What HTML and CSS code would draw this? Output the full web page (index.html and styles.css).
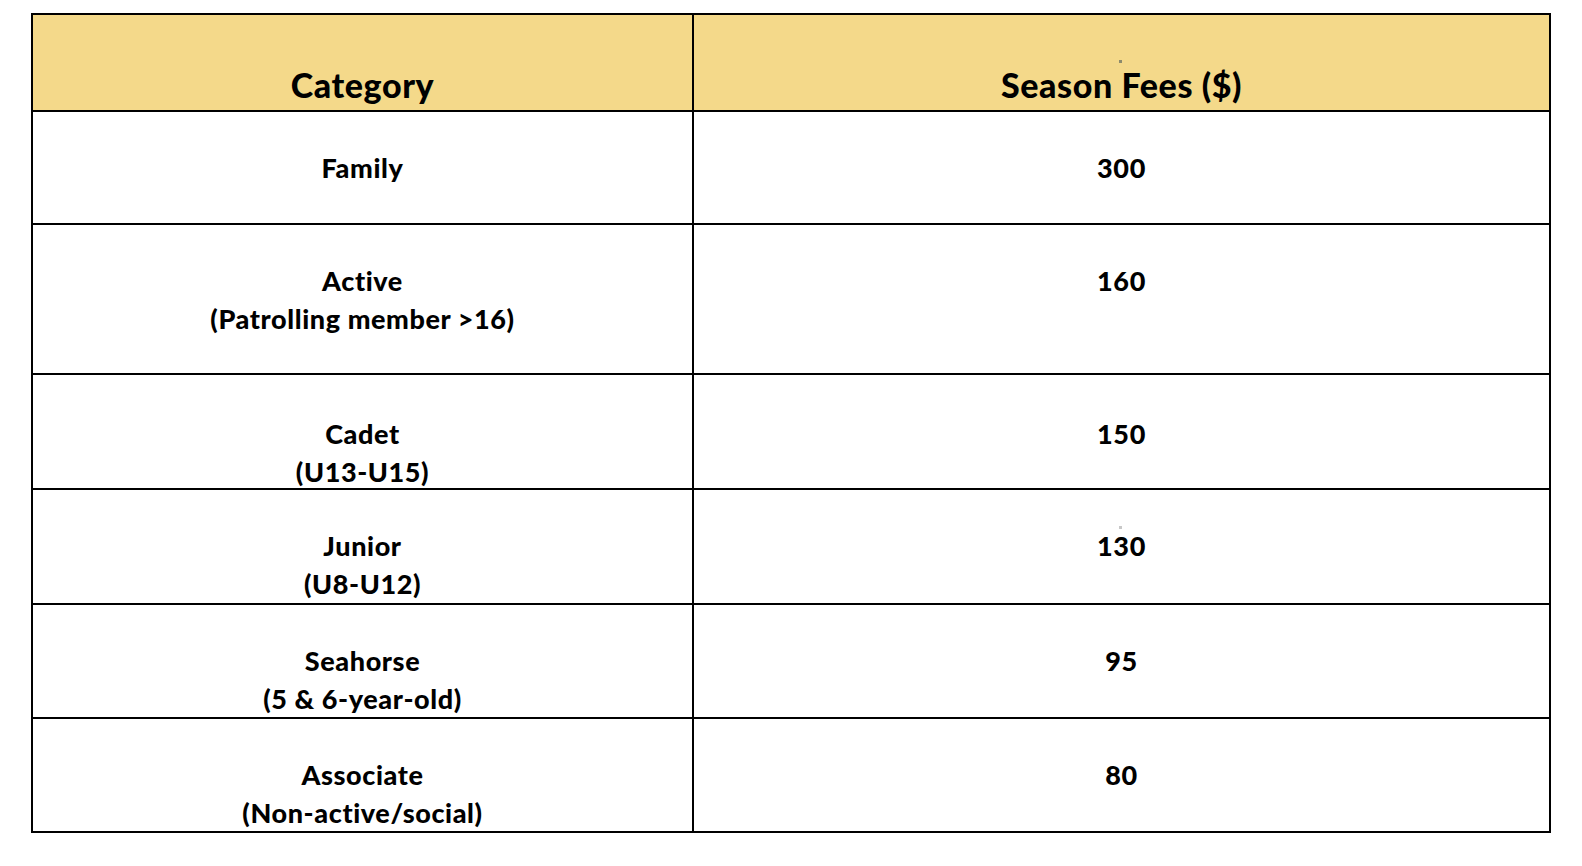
FILE: index.html
```html
<!DOCTYPE html>
<html lang="en">
<head>
<meta charset="utf-8">
<title>Season Fees</title>
<link rel="stylesheet" href="styles.css">
</head>
<body>
<div class="fees">
  <div class="cell head">Category</div>
  <div class="cell head right-col">Season Fees ($)<span class="mark mark-head"></span></div>

  <div class="cell"><span>Family</span></div>
  <div class="cell"><span>300</span></div>

  <div class="cell"><span>Active</span><span>(Patrolling member &gt;16)</span></div>
  <div class="cell"><span>160</span></div>

  <div class="cell low"><span>Cadet</span><span>(U13-U15)</span></div>
  <div class="cell low"><span>150</span></div>

  <div class="cell"><span>Junior</span><span>(U8-U12)</span></div>
  <div class="cell right-col"><span>130</span><span class="mark mark-body"></span></div>

  <div class="cell"><span>Seahorse</span><span>(5 &amp; 6-year-old)</span></div>
  <div class="cell"><span>95</span></div>

  <div class="cell"><span>Associate</span><span>(Non-active/social)</span></div>
  <div class="cell"><span>80</span></div>
</div>
</body>
</html>
```

FILE: styles.css
```css
html, body {
  margin: 0;
  padding: 0;
  background: #ffffff;
}

body {
  font-family: "Lato", "Liberation Sans", sans-serif;
  font-weight: 900;
  color: #000000;
}

.fees {
  box-sizing: border-box;
  margin: 13px 0 0 31px;
  width: 1520px;
  display: grid;
  grid-template-columns: 661px 857px;
  grid-template-rows: 97px 113px 150px 115px 115px 114px 114px;
  border-top: 2px solid #000;
  border-left: 2px solid #000;
}

.cell {
  box-sizing: border-box;
  border-right: 2px solid #000;
  border-bottom: 2px solid #000;
  display: flex;
  flex-direction: column;
  align-items: center;
  padding-top: 37px;
  font-size: 27px;
  letter-spacing: 0.6px;
  line-height: 38px;
  text-align: center;
}

.low {
  padding-top: 40px;
}

.head {
  background: #f4d98a;
  justify-content: flex-end;
  padding-top: 0;
  padding-bottom: 5px;
  font-size: 34px;
  letter-spacing: 0.6px;
  line-height: 40px;
}

.right-col {
  position: relative;
}

.mark {
  position: absolute;
  width: 3px;
  height: 3px;
  left: 425px;
}

.mark-head {
  top: 45px;
  background: #8c8a6c;
}

.mark-body {
  top: 36px;
  background: #c8c8c8;
}
```
